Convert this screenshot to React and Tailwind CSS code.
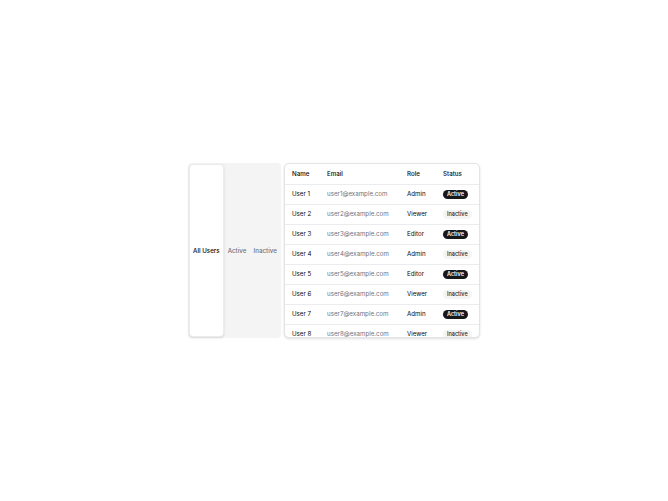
import React from "react";

const users = [
  { n: 1, role: "Admin", active: true },
  { n: 2, role: "Viewer", active: false },
  { n: 3, role: "Editor", active: true },
  { n: 4, role: "Admin", active: false },
  { n: 5, role: "Editor", active: true },
  { n: 6, role: "Viewer", active: false },
  { n: 7, role: "Admin", active: true },
  { n: 8, role: "Viewer", active: false },
];

function Badge({ active }) {
  return active ? (
    <span className="inline-flex items-center rounded-full bg-[#18181b] px-[4px] h-[9px] text-[5.5px] font-semibold leading-none text-white">
      Active
    </span>
  ) : (
    <span className="inline-flex items-center rounded-full bg-[#f4f4f5] px-[4px] h-[9px] text-[5.5px] font-medium leading-none text-[#27272a]">
      Inactive
    </span>
  );
}

export default function App() {
  return (
    <div
      className="flex min-h-screen w-full items-center justify-center bg-white"
      style={{ fontFamily: "Inter, 'Noto Sans', sans-serif" }}
    >
      <div className="flex h-[175px] gap-[3px]">
        <div className="flex h-full w-[93px] items-stretch rounded-[4px] bg-[#f4f4f5] p-px">
          <button className="flex w-[35px] items-center justify-center rounded-[4px] border border-[#ececee] bg-white text-[6.2px] font-medium text-[#09090b] shadow-sm">
            All Users
          </button>
          <button className="flex w-[27px] items-center justify-center text-[6.2px] font-medium text-[#71717a]">
            Active
          </button>
          <button className="flex w-[30px] items-center justify-center text-[6.2px] font-medium text-[#71717a]">
            Inactive
          </button>
        </div>
        <div className="h-full w-[196px] overflow-hidden rounded-[5px] border border-[#e4e4e7] bg-white shadow-sm">
          <table className="w-full table-fixed border-collapse text-[6.2px] text-[#09090b]">
            <colgroup>
              <col className="w-[42px]" />
              <col className="w-[80px]" />
              <col className="w-[36px]" />
              <col />
            </colgroup>
            <thead>
              <tr className="h-[20px] border-b border-[#ececee]">
                <th className="pl-[7px] text-left font-medium">Name</th>
                <th className="text-left font-medium">Email</th>
                <th className="text-left font-medium">Role</th>
                <th className="text-left font-medium">Status</th>
              </tr>
            </thead>
            <tbody>
              {users.map((u) => (
                <tr key={u.n} className="h-[20px] border-b border-[#ececee]">
                  <td className="pl-[7px]">User {u.n}</td>
                  <td className="text-[#71717a]">user{u.n}@example.com</td>
                  <td>{u.role}</td>
                  <td>
                    <Badge active={u.active} />
                  </td>
                </tr>
              ))}
            </tbody>
          </table>
        </div>
      </div>
    </div>
  );
}
